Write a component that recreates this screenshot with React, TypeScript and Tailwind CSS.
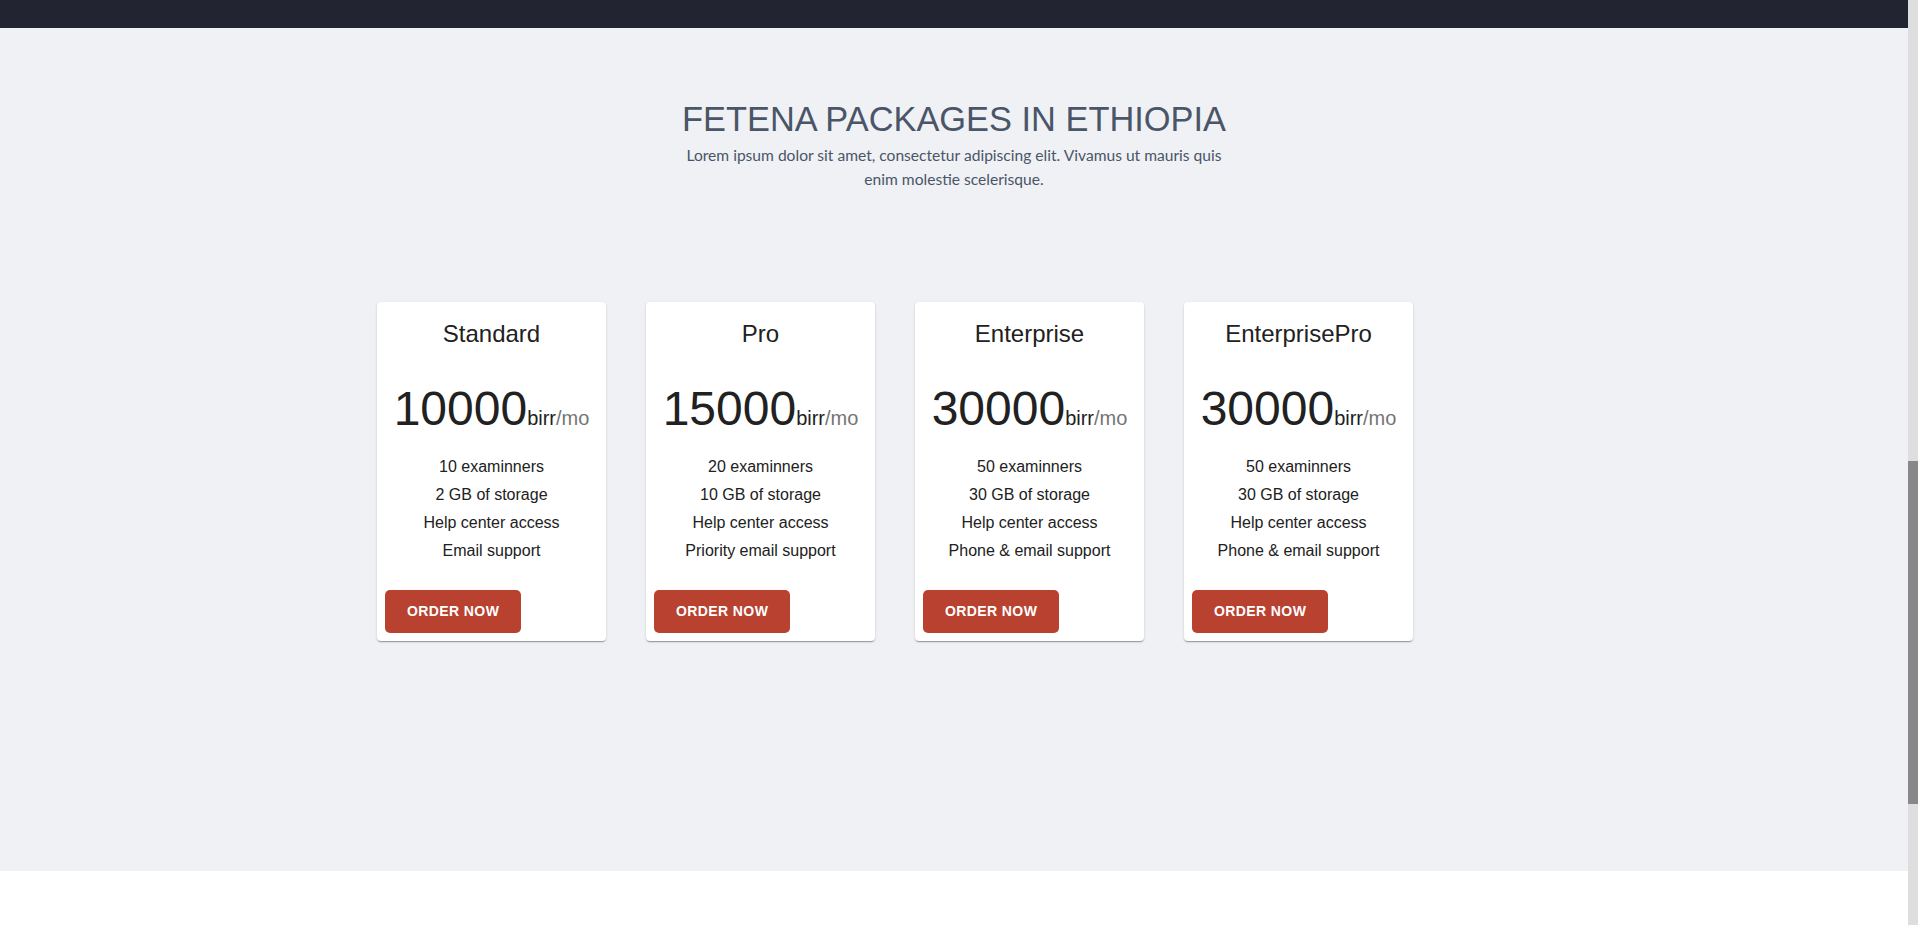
import React from 'react';

type Tier = {
  title: string;
  price: string;
  features: string[];
};

const TIERS: Tier[] = [
  { title: 'Standard', price: '10000', features: ['10 examinners', '2 GB of storage', 'Help center access', 'Email support'] },
  { title: 'Pro', price: '15000', features: ['20 examinners', '10 GB of storage', 'Help center access', 'Priority email support'] },
  { title: 'Enterprise', price: '30000', features: ['50 examinners', '30 GB of storage', 'Help center access', 'Phone & email support'] },
  { title: 'EnterprisePro', price: '30000', features: ['50 examinners', '30 GB of storage', 'Help center access', 'Phone & email support'] },
];

function PriceCard({ tier }: { tier: Tier }) {
  return (
    <div className="w-[229px] bg-white rounded-[4px] shadow-[0px_2px_1px_-1px_rgba(0,0,0,0.2),0px_1px_1px_0px_rgba(0,0,0,0.14),0px_1px_3px_0px_rgba(0,0,0,0.12)] flex flex-col">
      <div className="p-4 text-center text-[24px] leading-[32px] text-[#212121]">{tier.title}</div>
      <div className="px-4 pt-[15px] pb-4">
        <div className="flex items-baseline justify-center mb-4">
          <span className="text-[48px] leading-[56px] text-[#212121]">{tier.price}</span>
          <span className="text-[20px] leading-[32px] text-[#212121]">birr</span>
          <span className="text-[20px] leading-[32px] text-[#757575]">/mo</span>
        </div>
        <ul>
          {tier.features.map(f => (
            <li key={f} className="text-center text-[16px] leading-[28px] text-[#212121]">{f}</li>
          ))}
        </ul>
      </div>
      <div className="px-2 pt-[9px] pb-2">
        <button className="h-[43px] px-[22px] rounded-[5px] bg-[#b9412f] text-white text-[14px] font-bold uppercase tracking-[0.4px]">
          Order now
        </button>
      </div>
    </div>
  );
}

export default function App() {
  return (
    <div className="flex h-[925px] overflow-hidden bg-white font-['Liberation_Sans',Arial,sans-serif]">
      <div className="flex-1 flex flex-col min-w-0">
        <div className="h-[28px] shrink-0 bg-[#222431]" />
        <section className="h-[843px] shrink-0 bg-[#eff1f5] flex flex-col">
          <h1 className="mt-[72px] text-center text-[34.4px] leading-[39px] text-[#4a5568] font-normal">
            FETENA PACKAGES IN ETHIOPIA
          </h1>
          <p className="mt-[4px] mx-auto max-w-[550px] text-center text-[15.6px] leading-[24px] text-[#4a5568] font-['Lato',sans-serif]">
            Lorem ipsum dolor sit amet, consectetur adipiscing elit. Vivamus ut mauris quis enim molestie scelerisque.
          </p>
          <div className="mt-[111px] w-[1200px] mx-auto pl-[23px] pr-6 flex gap-[40px] items-start">
            {TIERS.map(t => (
              <PriceCard key={t.title} tier={t} />
            ))}
          </div>
        </section>
        <div className="flex-1 bg-white" />
      </div>
      <div className="w-[10px] shrink-0 bg-[#dedede] flex flex-col">
        <div className="mt-[461px] h-[343px] bg-[#888888]" />
      </div>
    </div>
  );
}
